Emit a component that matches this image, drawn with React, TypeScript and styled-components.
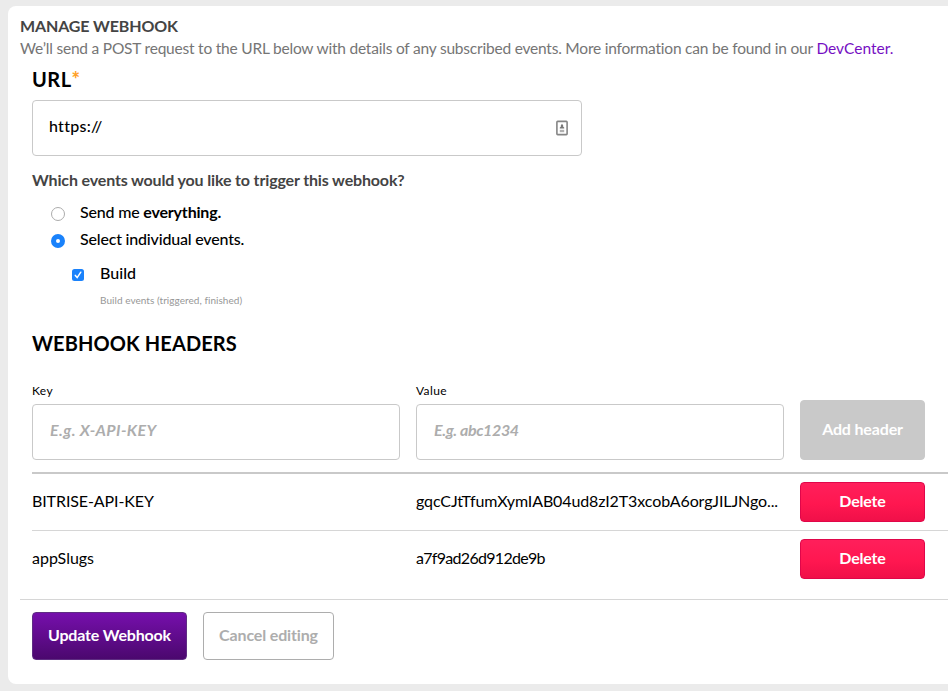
import React, { useState } from "react";
import styled, { createGlobalStyle, css } from "styled-components";

const GlobalStyle = createGlobalStyle`
  * { box-sizing: border-box; }
  body {
    margin: 0;
    background: #ebebeb;
    color: #000;
    font-family: Lato, "Liberation Sans", sans-serif;
    font-size: 16px;
    font-kerning: normal;
    overflow: hidden;
  }
  h1, h2, h3, p { margin: 0; }
  button, input { font-family: inherit; }
`;

const Page = styled.div`
  height: 691px;
  padding: 6px 0 7px 8px;
`;

const Card = styled.main`
  height: 678px;
  padding: 9px 0 0 12px;
  background: #fff;
  border-radius: 8px 0 0 8px;
  white-space: nowrap;
`;

const Title = styled.h1`
  color: #444;
  font-size: 16px;
  line-height: 22px;
  letter-spacing: -0.12px;
`;

const Intro = styled.p`
  color: #757575;
  font-size: 15.5px;
  line-height: 22px;
  letter-spacing: -0.21px;
`;

const DocLink = styled.a`
  color: #760fc3;
  text-decoration: none;
  letter-spacing: 0;
`;

const Form = styled.form`
  padding-left: 12px;
`;

const Heading = styled.h2<{ $top: number; $spacing: number }>`
  height: 24px;
  margin-top: ${(p) => p.$top}px;
  font-size: 20px;
  line-height: 24px;
  letter-spacing: ${(p) => p.$spacing}px;
`;

const Required = styled.span`
  color: #ffa128;
  font-size: 20px;
  font-weight: 900;
  line-height: 1;
  letter-spacing: 0;
`;

const fieldBox = css`
  height: 56px;
  border: 1px solid #c9c9c9;
  border-radius: 4px;
  background: #fff;
`;

const UrlField = styled.div`
  ${fieldBox}
  display: flex;
  align-items: center;
  width: 550px;
  margin-top: 9px;
  padding: 0 13px 0 16px;
`;

const UrlInput = styled.input`
  flex: 1;
  padding: 0 0 4px;
  border: 0;
  outline: 0;
  background: none;
  color: #000;
  font-size: 16px;
  font-weight: 500;
  line-height: 20px;
  letter-spacing: 0.27px;
`;

const Question = styled.h3`
  margin-top: 14px;
  color: #444;
  font-size: 16px;
  line-height: 20px;
  letter-spacing: -0.15px;
`;

const Choices = styled.div`
  margin-top: 8px;
  padding-left: 19px;
`;

const Choice = styled.label<{ $nested?: boolean }>`
  display: flex;
  align-items: center;
  gap: ${(p) => (p.$nested ? 16 : 15)}px;
  height: 27px;
  margin: ${(p) => (p.$nested ? "7px 0 0 21px" : "0")};
  font-weight: 500;
  letter-spacing: ${(p) => (p.$nested ? 0.02 : -0.19)}px;
`;

const Radio = styled.span<{ $on: boolean }>`
  width: 14px;
  height: 14px;
  margin-top: 5px;
  border: ${(p) => (p.$on ? "5px solid #1a82fb" : "1px solid #acacac")};
  border-radius: 50%;
  background: #fff;
`;

const HiddenInput = styled.input`
  appearance: none;
  width: 0;
  height: 0;
  margin: 0 -15px 0 0;
`;

const CheckIcon = styled.svg`
  width: 12px;
  height: 12px;
  margin-top: 4px;
`;

const Hint = styled.p`
  margin: 6px 0 0 49px;
  color: #979797;
  font-size: 10px;
  line-height: 16px;
  letter-spacing: 0.05px;
`;

const headerColumns = css`
  display: grid;
  grid-template-columns: 368px 368px 125px;
  column-gap: 16px;
`;

const NewHeader = styled.div`
  ${headerColumns}
  align-items: end;
  height: 91px;
  margin-top: 28px;
  padding-bottom: 12px;
  border-bottom: 2px solid #c9c9c9;
`;

const Field = styled.label`
  display: flex;
  flex-direction: column;
  gap: 5px;
  font-size: 12px;
  line-height: 16px;
  letter-spacing: 0.38px;
`;

const TextInput = styled.input<{ $spacing: number }>`
  ${fieldBox}
  width: 100%;
  padding: 0 16px 5px 17px;
  outline: 0;
  font-size: 16px;
  font-weight: 700;
  letter-spacing: ${(p) => p.$spacing}px;
  &::placeholder {
    color: #adadad;
    font-style: italic;
    opacity: 1;
  }
`;

const HeaderRow = styled.div<{ $last?: boolean }>`
  ${headerColumns}
  height: ${(p) => (p.$last ? 68 : 57)}px;
  padding-top: 8px;
  border-bottom: ${(p) => (p.$last ? "0" : "1px solid #d6d6d6")};
`;

const Cell = styled.span<{ $spacing: number }>`
  line-height: 38px;
  letter-spacing: ${(p) => p.$spacing}px;
`;

const Button = styled.button`
  padding: 0 0 4px;
  border: 1px solid #c9c9c9;
  border-radius: 4px;
  color: #fff;
  font-size: 16px;
  font-weight: 700;
`;

const AddButton = styled(Button)`
  height: 60px;
  background: #c9c9c9;
  letter-spacing: -0.16px;
`;

const DeleteButton = styled(Button)`
  height: 40px;
  border-color: #e0064a;
  background: linear-gradient(#ff1f5b, #ff1750 55%, #f01049);
  letter-spacing: -0.2px;
`;

const Actions = styled.footer`
  display: flex;
  gap: 16px;
  padding: 12px 0 0 12px;
  border-top: 1px solid #d6d6d6;
`;

const UpdateButton = styled(Button)`
  width: 155px;
  height: 48px;
  border-color: #5f2d83;
  background: linear-gradient(#760fac, #4b086e);
  letter-spacing: -0.174px;
`;

const CancelButton = styled(Button)`
  width: 131px;
  height: 48px;
  border-color: #adadad;
  background: #fff;
  color: #adadad;
  letter-spacing: -0.15px;
`;

const AutofillIcon = () => (
  <svg width="12" height="16" viewBox="0 0 12 16">
    <rect x="0.9" y="1.4" width="10.2" height="13.2" rx="0.8" fill="#fff" stroke="#858585" strokeWidth="1.6" />
    <path d="M6 3.8 7.2 5.6v1.2l1 .6v1H3.8v-1l1-.6V5.6z" fill="#777" />
    <path d="M3.8 9.8h4.4v2.4H3.8z" fill="#b0b0b0" />
  </svg>
);

const headers = [
  { name: "BITRISE-API-KEY", nameSpacing: -0.1, value: "gqcCJtTfumXymIAB04ud8zI2T3xcobA6orgJILJNgo...", valueSpacing: -0.11 },
  { name: "appSlugs", nameSpacing: -0.02, value: "a7f9ad26d912de9b", valueSpacing: -0.7 },
];

export default function App() {
  const [url, setUrl] = useState("https://");
  const [everything, setEverything] = useState(false);

  return (
    <Page>
      <GlobalStyle />
      <Card>
        <Title>MANAGE WEBHOOK</Title>
        <Intro>
          We’ll send a POST request to the URL below with details of any subscribed events. More information can be
          found in our <DocLink href="#">DevCenter.</DocLink>
        </Intro>
        <Form>
          <Heading $top={8} $spacing={0.5}>
            URL<Required>*</Required>
          </Heading>
          <UrlField>
            <UrlInput value={url} onChange={(e) => setUrl(e.target.value)} />
            <AutofillIcon />
          </UrlField>
          <Question>Which events would you like to trigger this webhook?</Question>
          <Choices>
            <Choice>
              <Radio $on={everything} />
              <HiddenInput type="radio" checked={everything} onChange={() => setEverything(true)} />
              <span>
                Send me <b>everything.</b>
              </span>
            </Choice>
            <Choice>
              <Radio $on={!everything} />
              <HiddenInput type="radio" checked={!everything} onChange={() => setEverything(false)} />
              <span>Select individual events.</span>
            </Choice>
            <Choice $nested>
              <CheckIcon viewBox="0 0 12 12">
                <rect width="12" height="12" rx="2.5" fill="#1a82fb" />
                <path d="m3.3 6.4 1.9 2.2 3.6-5.4" fill="none" stroke="#fff" strokeWidth="1.5" strokeLinecap="round" />
              </CheckIcon>
              Build
            </Choice>
            <Hint>Build events (triggered, finished)</Hint>
          </Choices>
          <Heading $top={23} $spacing={0.1}>
            WEBHOOK HEADERS
          </Heading>
          <NewHeader>
            <Field>
              Key
              <TextInput $spacing={0.4} placeholder="E.g. X-API-KEY" />
            </Field>
            <Field>
              Value
              <TextInput $spacing={-0.36} placeholder="E.g. abc1234" />
            </Field>
            <AddButton type="button">Add header</AddButton>
          </NewHeader>
          {headers.map((h, i) => (
            <HeaderRow key={h.name} $last={i === headers.length - 1}>
              <Cell $spacing={h.nameSpacing}>{h.name}</Cell>
              <Cell $spacing={h.valueSpacing}>{h.value}</Cell>
              <DeleteButton type="button">Delete</DeleteButton>
            </HeaderRow>
          ))}
        </Form>
        <Actions>
          <UpdateButton type="button">Update Webhook</UpdateButton>
          <CancelButton type="button">Cancel editing</CancelButton>
        </Actions>
      </Card>
    </Page>
  );
}
